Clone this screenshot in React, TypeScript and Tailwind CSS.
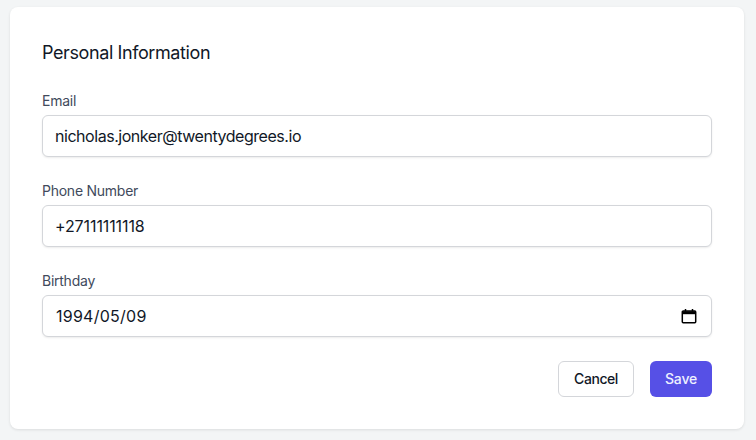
export default function App() {
  const inputCls =
    "block w-full h-[42px] rounded-md border border-[#d4d6da] bg-white px-3 text-base text-[#111827] shadow-[0_1px_2px_rgba(0,0,0,0.08)] outline-none";
  const labelCls = "block mb-1 text-sm leading-5 text-[#414a5c] tracking-[-0.25px]";
  return (
    <div className="w-[756px] h-[440px] overflow-hidden bg-[#f3f5f6] pt-[7px] pl-[10px] font-['Inter',sans-serif]">
      <div className="w-[734px] h-[422px] rounded-lg bg-white p-8 shadow-[0_1px_3px_rgba(0,0,0,0.1)]">
        <h2 className="mb-6 text-lg leading-7 font-normal tracking-[-0.4px] text-[#111827]">Personal Information</h2>
        <div className="flex flex-col gap-6">
          <div>
            <label className={labelCls}>Email</label>
            <input className={inputCls + " tracking-[-0.46px]"} readOnly value="nicholas.jonker@twentydegrees.io" />
          </div>
          <div>
            <label className={labelCls}>Phone Number</label>
            <input className={inputCls + " tracking-[-0.1px]"} readOnly value="+27111111118" />
          </div>
          <div>
            <label className={labelCls}>Birthday</label>
            <div className="relative">
              <input className={inputCls + " pl-[13px] tracking-[0.25px]"} readOnly value="1994/05/09" />
              <svg
                className="absolute right-[15px] top-[13px] h-4 w-4 text-black"
                viewBox="0 0 16 16"
                fill="none"
              >
                <path
                  d="M2.2 3h11.6a.9.9 0 0 1 .9.9v9.9a.9.9 0 0 1-.9.9H2.2a.9.9 0 0 1-.9-.9V3.900a.9.9 0 0 1 .9-.9Z"
                  stroke="currentColor"
                  strokeWidth="1.5"
                />
                <path d="M1.500 3.200h13v3h-13z" fill="currentColor" />
                <path d="M4.500 1v2.500M11.500 1v2.500" stroke="currentColor" strokeWidth="1.500" />
              </svg>
            </div>
          </div>
          <div className="flex justify-end gap-4">
            <button className="h-9 w-[76px] rounded-md border border-[#d4d6da] bg-white text-sm font-medium tracking-[-0.45px] text-[#111827]">
              Cancel
            </button>
            <button className="h-9 w-[62px] rounded-md bg-[#5650e6] text-sm font-medium tracking-[-0.2px] text-[#eef0ff]">
              Save
            </button>
          </div>
        </div>
      </div>
    </div>
  );
}
